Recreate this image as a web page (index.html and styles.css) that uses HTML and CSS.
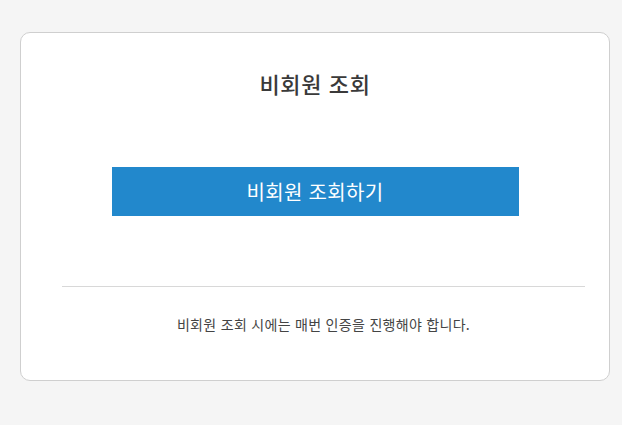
FILE: index.html
```html
<!DOCTYPE html>
<html lang="ko">
<head>
<meta charset="utf-8">
<link rel="stylesheet" href="styles.css">
</head>
<body>
<div class="card">
  <h2 class="title">비회원 조회</h2>
  <div class="btn-wrap"><button class="btn">비회원 조회하기</button></div>
  <div class="bottom">
    <hr class="divider">
    <p class="note">비회원 조회 시에는 매번 인증을 진행해야 합니다.</p>
  </div>
</div>
</body>
</html>
```
FILE: styles.css
```css
html, body { margin: 0; padding: 0; }
body {
  background: #f5f5f5;
  font-family: "Noto Sans CJK KR", "Noto Sans", sans-serif;
  width: 622px;
  height: 425px;
  overflow: hidden;
}
.card {
  box-sizing: border-box;
  margin: 32px 0 0 20px;
  width: 590px;
  height: 349px;
  background: #fff;
  border: 1px solid #cfcfcf;
  border-radius: 10px;
  padding-top: 34px;
}
.title {
  margin: 0;
  text-align: center;
  font-size: 22px;
  line-height: 32px;
  font-weight: 500;
  letter-spacing: 0.6px;
  color: #3a3a3a;
}
.btn-wrap {
  display: flex;
  justify-content: center;
  margin-top: 68px;
}
.btn {
  width: 407px;
  height: 49px;
  border: 0;
  background: #2288cc;
  color: #fff;
  font-family: inherit;
  font-size: 20px;
  letter-spacing: 0.3px;
  padding: 0;
}
.bottom {
  padding: 0 24px 0 41px;
  margin-top: 70px;
}
.divider {
  border: 0;
  border-top: 1px solid #d8d8d8;
  margin: 0;
}
.note {
  margin: 27px 0 0;
  text-align: center;
  font-size: 14px;
  line-height: 20px;
  letter-spacing: 0.3px;
  color: #444;
}
```
